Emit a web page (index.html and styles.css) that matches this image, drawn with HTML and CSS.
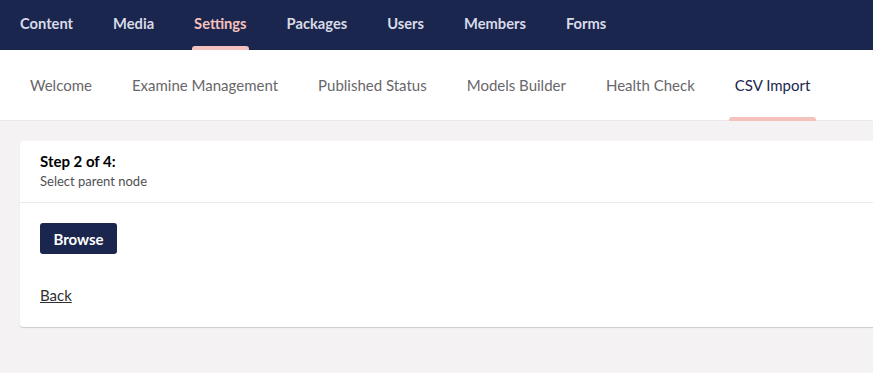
FILE: index.html
```html
<!DOCTYPE html>
<html>
    <head>
        <title>CSV Import</title>
        <link rel="stylesheet" href="styles.css">
    </head>
    <body>
        <ul class="sections">
            <li><a href="" class="section">Content</a></li>
            <li><a href="" class="section">Media</a></li>
            <li><a href="" class="section active">Settings</a></li>
            <li><a href="" class="section">Packages</a></li>
            <li><a href="" class="section">Users</a></li>
            <li><a href="" class="section">Members</a></li>
            <li><a href="" class="section">Forms</a></li>
        </ul>
        <ul class="tabs">
            <li><a href="" class="tab">Welcome</a></li>
            <li><a href="" class="tab">Examine Management</a></li>
            <li><a href="" class="tab">Published Status</a></li>
            <li><a href="" class="tab">Models Builder</a></li>
            <li><a href="" class="tab">Health Check</a></li>
            <li><a href="" class="tab active">CSV Import</a></li>
        </ul>
        <div class="main">
            <div class="box">
                <div class="box-header">
                    <div class="box-title">Step 2 of 4:</div>
                    <div class="box-desc">Select parent node</div>
                </div>
                <div class="box-content">
                    <button class="btn">Browse</button>
                    <a href="" class="back">Back</a>
                </div>
            </div>
        </div>
    </body>
</html>
```
FILE: styles.css
```css
body {
  margin: 0;
  height: 373px;
  overflow: hidden;
  background-color: #f4f2f2;
  font-family: Lato, "Open Sans", sans-serif;
}

ul {
  list-style: none;
  margin: 0;
  padding: 0;
}

a {
  text-decoration: none;
}

.sections {
  display: flex;
  height: 50px;
  background-color: #1b264f;
}

.section {
  position: relative;
  display: block;
  padding: 0 20px;
  line-height: 46px;
  height: 50px;
  box-sizing: border-box;
  font-size: 14.7px;
  font-weight: 700;
  color: #d8dbe6;
}

.section.active {
  color: #f5c1bc;
}

.section.active::after {
  content: "";
  position: absolute;
  left: 18px;
  right: 18px;
  bottom: 0;
  height: 4px;
  border-radius: 3px 3px 0 0;
  background-color: #f5c1bc;
}

.tabs {
  display: flex;
  height: 70px;
  padding: 0 10px;
  background-color: #fff;
  border-bottom: 1px solid #e9e9eb;
}

.tab {
  position: relative;
  display: block;
  padding: 0 20px;
  line-height: 70px;
  height: 70px;
  font-size: 15px;
  color: #68676b;
}

.tab.active {
  color: #1b264f;
}

.tab.active::after {
  content: "";
  position: absolute;
  left: 14px;
  right: 14px;
  bottom: -1px;
  height: 4px;
  border-radius: 3px 3px 0 0;
  background-color: #f5c1bc;
}

.main {
  padding: 20px 0 0 20px;
}

.box {
  width: 880px;
  background-color: #fff;
  border-radius: 3px;
  box-shadow: 0 1px 1px rgba(0, 0, 0, 0.16);
}

.box-header {
  padding: 10px 20px 11px;
  border-bottom: 1px solid #e9e9eb;
}

.box-title {
  font-size: 15px;
  font-weight: 700;
  color: #000;
  line-height: 20px;
}

.box-desc {
  font-size: 13px;
  color: #515054;
  line-height: 20px;
}

.box-content {
  padding: 20px 20px 22px;
}

.btn {
  display: block;
  width: 77px;
  height: 31px;
  padding: 0;
  border: 0;
  border-radius: 3px;
  background-color: #1b264f;
  color: #fff;
  font-family: Lato, "Open Sans", sans-serif;
  font-size: 15px;
  font-weight: 700;
}

.back {
  display: inline-block;
  margin-top: 31px;
  font-size: 15px;
  line-height: 20px;
  color: #303033;
  text-decoration: underline;
}
```
